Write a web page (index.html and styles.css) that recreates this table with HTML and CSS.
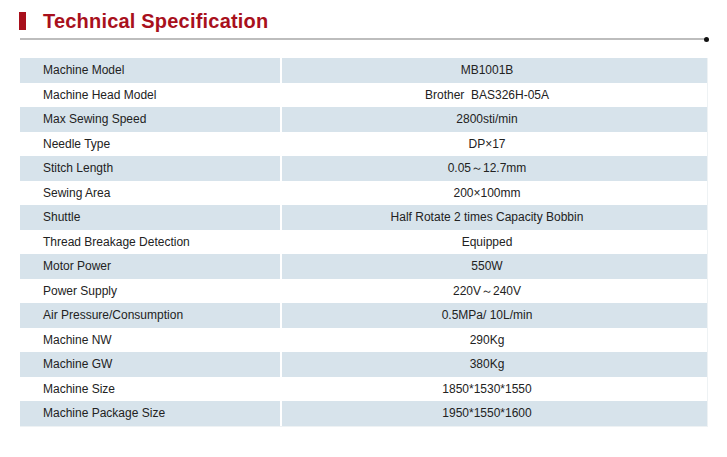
FILE: index.html
```html
<!DOCTYPE html>
<html>
<head>
<meta charset="utf-8">
<link rel="stylesheet" href="styles.css">
</head>
<body>
<div class="page">
  <div class="heading">
    <span class="bar"></span>
    <h1 class="title">Technical Specification</h1>
  </div>
  <div class="rule"><span class="dot"></span></div>
  <table class="spec">
    <tr class="alt"><td class="k">Machine Model</td><td class="v">MB1001B</td></tr>
    <tr><td class="k">Machine Head Model</td><td class="v">Brother&nbsp;&nbsp;BAS326H-05A</td></tr>
    <tr class="alt"><td class="k">Max Sewing Speed</td><td class="v">2800sti/min</td></tr>
    <tr><td class="k">Needle Type</td><td class="v">DP×17</td></tr>
    <tr class="alt"><td class="k">Stitch Length</td><td class="v">0.05～12.7mm</td></tr>
    <tr><td class="k">Sewing Area</td><td class="v">200×100mm</td></tr>
    <tr class="alt"><td class="k">Shuttle</td><td class="v">Half Rotate 2 times Capacity Bobbin</td></tr>
    <tr><td class="k">Thread Breakage Detection</td><td class="v">Equipped</td></tr>
    <tr class="alt"><td class="k">Motor Power</td><td class="v">550W</td></tr>
    <tr><td class="k">Power Supply</td><td class="v">220V～240V</td></tr>
    <tr class="alt"><td class="k">Air Pressure/Consumption</td><td class="v">0.5MPa/ 10L/min</td></tr>
    <tr><td class="k">Machine NW</td><td class="v">290Kg</td></tr>
    <tr class="alt"><td class="k">Machine GW</td><td class="v">380Kg</td></tr>
    <tr><td class="k">Machine Size</td><td class="v">1850*1530*1550</td></tr>
    <tr class="alt"><td class="k">Machine Package Size</td><td class="v">1950*1550*1600</td></tr>
  </table>
</div>
</body>
</html>
```

FILE: styles.css
```css
html, body {
  margin: 0;
  padding: 0;
  background: #ffffff;
}
.page {
  width: 727px;
  height: 457px;
  font-family: "Liberation Sans", Arial, sans-serif;
  color: #222;
  overflow: hidden;
}
.heading {
  display: flex;
  align-items: center;
  gap: 17px;
  padding: 10px 0 0 19px;
  height: 22px;
}
.bar {
  display: block;
  width: 7px;
  height: 18px;
  background: #a8101c;
}
.title {
  margin: 0;
  font-size: 20px;
  font-weight: bold;
  letter-spacing: 0.2px;
  color: #a8101c;
  line-height: 22px;
}
.rule {
  position: relative;
  margin: 6px 0 0 20px;
  width: 686px;
  height: 2px;
  background: #bdbdbd;
}
.dot {
  position: absolute;
  right: -3px;
  top: -1.5px;
  width: 5px;
  height: 5px;
  border-radius: 50%;
  background: #111;
}
.spec {
  margin: 18px 0 0 20px;
  width: 688px;
  border-collapse: separate;
  border-spacing: 0;
  font-size: 12px;
  border: 1px solid #eef2f4;
  border-top: none;
  border-left: none;
}
.spec td {
  height: 24.5px;
  padding: 0;
  box-sizing: border-box;
  line-height: 14px;
}
.spec tr.alt td {
  background: #d7e3eb;
}
.spec .k {
  width: 260px;
  padding-left: 23px;
}
.spec .v {
  text-align: center;
  border-left: 2px solid #ffffff;
  padding-right: 15px;
}
```
